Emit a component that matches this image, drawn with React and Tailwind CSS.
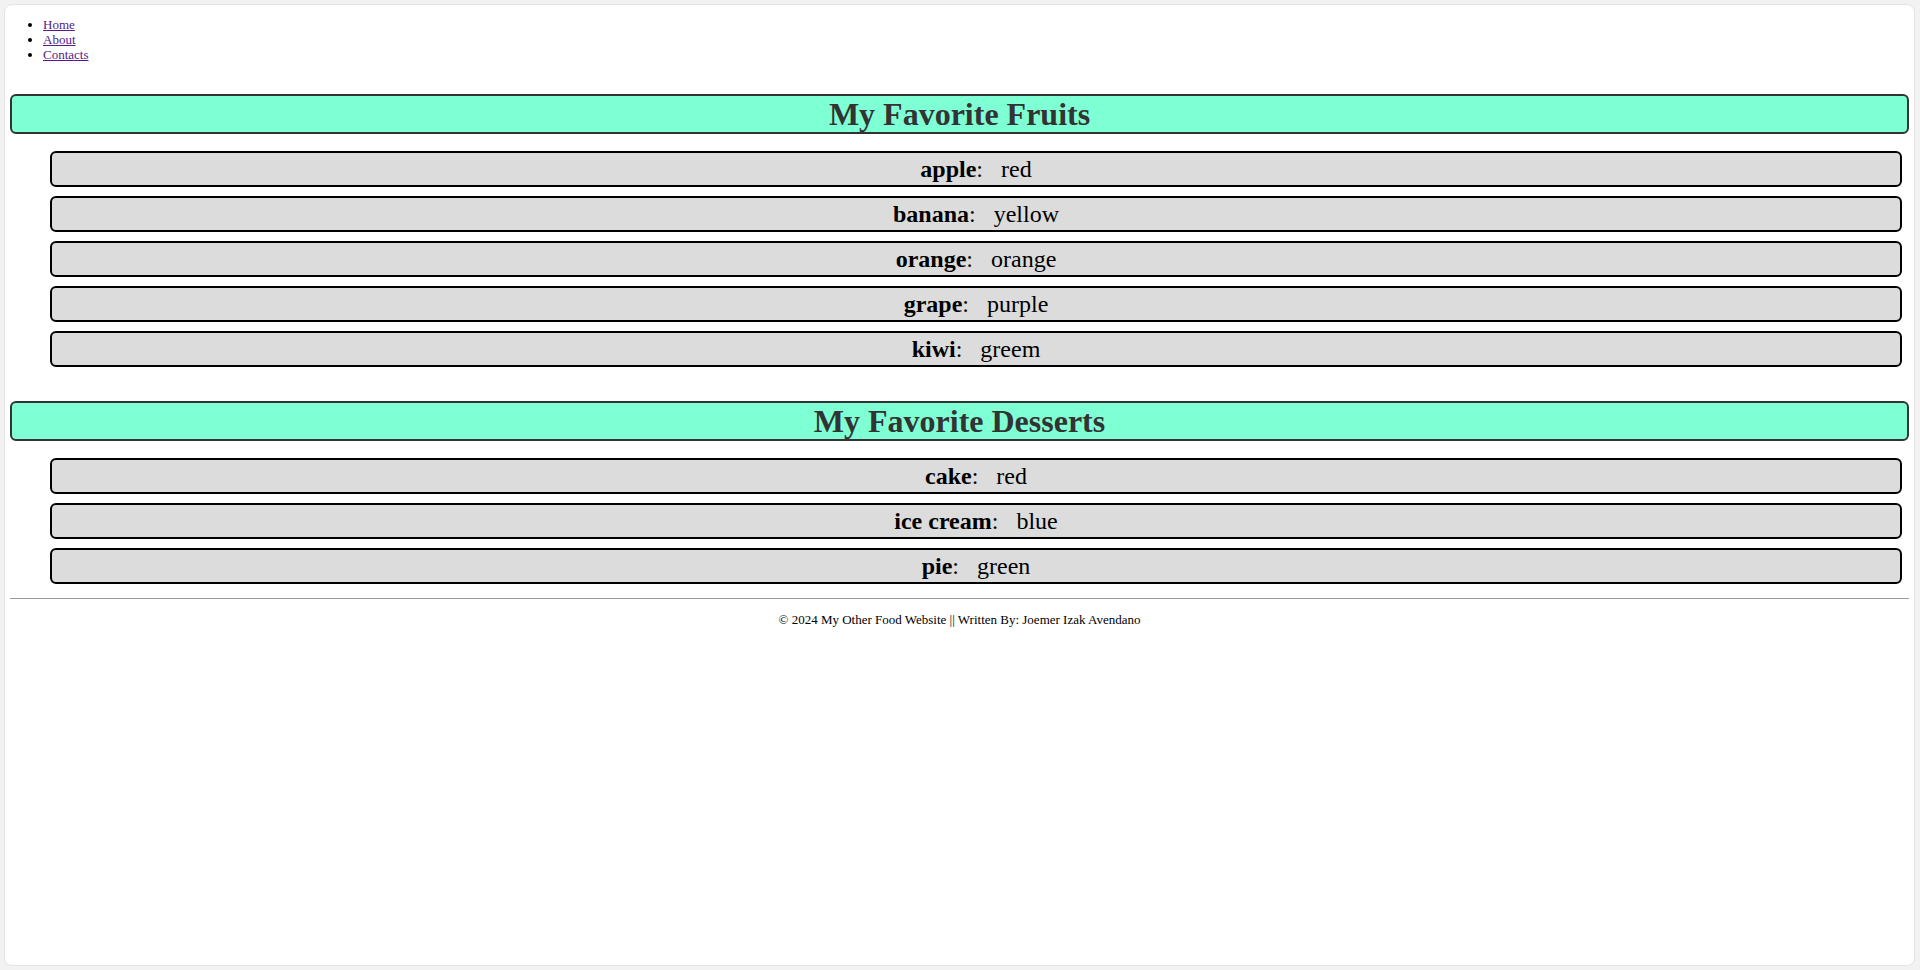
import React from 'react';

const fruits = [
  { name: 'apple', color: 'red' },
  { name: 'banana', color: 'yellow' },
  { name: 'orange', color: 'orange' },
  { name: 'grape', color: 'purple' },
  { name: 'kiwi', color: 'greem' },
];

const desserts = [
  { name: 'cake', color: 'red' },
  { name: 'ice cream', color: 'blue' },
  { name: 'pie', color: 'green' },
];

const navLinks = ['Home', 'About', 'Contacts'];

// One titled block: aquamarine header bar with grey rows underneath
const FoodSection = ({ title, items, className = '' }) => (
  <section className={className}>
    <h1 className="h-[40px] overflow-hidden border-2 border-[#333] rounded-md bg-[#7fffd4] text-center text-[32px] leading-[37px] font-bold text-[#333]">
      {title}
    </h1>
    <ul className="mt-[17px] pl-[40px] pr-[7px] flex flex-col gap-[9px]">
      {items.map(item => (
        <li
          key={item.name}
          className="h-[36px] overflow-hidden border-2 border-black rounded-md bg-[#dcdcdc] text-center text-[24px] leading-[33px] text-black"
        >
          <b>{item.name}</b>:{'\u00a0\u00a0\u00a0'}{item.color}
        </li>
      ))}
    </ul>
  </section>
);

export default function App() {
  return (
    <div className="h-[970px] bg-[#f2f2f2] pt-1 pl-1 pr-[5px] pb-1 font-['Liberation_Serif','Times_New_Roman',serif]">
      <div className="h-full bg-white border border-[#e4e4e4] rounded-lg px-[5px] pt-[12px]">
        {/* Nav */}
        <ul className="list-disc pl-[33px] text-[13px] leading-[15px]">
          {navLinks.map(link => (
            <li key={link}>
              <a href="#" className="text-[#551a8b] underline">{link}</a>
            </li>
          ))}
        </ul>

        <FoodSection title="My Favorite Fruits" items={fruits} className="mt-[32px]" />
        <FoodSection title="My Favorite Desserts" items={desserts} className="mt-[34px]" />

        {/* Footer */}
        <hr className="mt-[14px] border-0 border-t border-[#9a9a9a]" />
        <p className="mt-[13px] text-center text-[13px] leading-[15px] text-black">
          © 2024 My Other Food Website || Written By: Joemer Izak Avendano
        </p>
      </div>
    </div>
  );
}
